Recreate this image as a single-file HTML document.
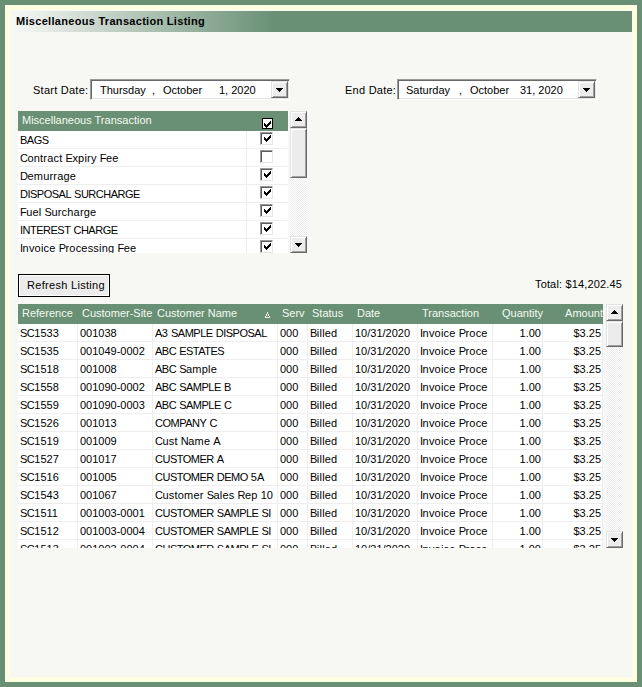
<!DOCTYPE html>
<html><head><meta charset="utf-8"><style>
*{box-sizing:border-box;margin:0;padding:0}
html,body{width:642px;height:687px;overflow:hidden;background:#699075;font-family:"Liberation Sans",sans-serif;font-size:11px;color:#000}
.a{position:absolute}
.t{position:absolute;white-space:nowrap;line-height:13px;height:13px}
.b{font-weight:bold}
.dbox{position:absolute;width:200px;height:21px;background:#fff;border-top:1px solid #9a9a9a;border-left:1px solid #9a9a9a;border-right:1px solid #fff;border-bottom:1px solid #fff;box-shadow:inset 1px 1px 0 #696969,inset -1px -1px 0 #e3e3e3}
.btn3d{position:absolute;width:17px;height:17px;background:#ececec;border-top:1px solid #e3e3e3;border-left:1px solid #e3e3e3;border-right:1px solid #696969;border-bottom:1px solid #696969;box-shadow:inset 1px 1px 0 #fff,inset -1px -1px 0 #a0a0a0}
.sb{position:absolute;width:17px;background-color:#fff;background-image:linear-gradient(45deg,#ececec 25%,transparent 25%,transparent 75%,#ececec 75%),linear-gradient(45deg,#ececec 25%,transparent 25%,transparent 75%,#ececec 75%);background-size:2px 2px;background-position:0 0,1px 1px}
.row{position:absolute;height:18px;background:#fff;border-bottom:1px solid #eeeeee}
.c{position:absolute;top:0;height:17px;overflow:hidden;white-space:nowrap;line-height:13px;padding-top:3px;padding-left:2px;border-right:1px solid #eeeeee}
.r{text-align:right;padding-left:0;padding-right:1px}
.cb{position:absolute;width:13px;height:13px;background:#fff;border-top:1px solid #9a9a9a;border-left:1px solid #9a9a9a;border-right:1px solid #e6e6e6;border-bottom:1px solid #e6e6e6;box-shadow:inset 1px 1px 0 #5c5c5c}
.u{letter-spacing:-0.5px}
.w{letter-spacing:0.2px}
.hdr{position:absolute;background:#699075;color:#f4faf0}
</style></head><body>
<div class="a" style="left:5px;top:5px;width:632px;height:677px;background:#fffee0"></div><div class="a" style="left:10px;top:10px;width:622px;height:667px;background:#f7f7f3"></div><div class="a" style="left:16px;top:11px;width:616px;height:21px;background:linear-gradient(to right,#f6f7f5 0%,#699075 42%,#699075 100%)"></div><div class="t b" style="left:16px;top:15px;letter-spacing:0.3px">Miscellaneous Transaction Listing</div><div class="t " style="left:33px;top:84px;letter-spacing:0.25px">Start Date:</div><div class="dbox" style="left:90px;top:79px"></div><div class="t " style="left:100px;top:84px;">Thursday</div><div class="t " style="left:152px;top:84px;">,</div><div class="t " style="left:163px;top:84px;">October</div><div class="t " style="left:219px;top:84px;">1, 2020</div><div class="btn3d" style="left:271px;top:81px"></div><div class="a" style="left:276px;top:88px;width:7px;height:1px;background:#000"></div><div class="a" style="left:277px;top:89px;width:5px;height:1px;background:#000"></div><div class="a" style="left:278px;top:90px;width:3px;height:1px;background:#000"></div><div class="a" style="left:279px;top:91px;width:1px;height:1px;background:#000"></div><div class="t " style="left:345px;top:84px;letter-spacing:0.25px">End Date:</div><div class="dbox" style="left:397px;top:79px"></div><div class="t " style="left:406px;top:84px;">Saturday</div><div class="t " style="left:459px;top:84px;">,</div><div class="t " style="left:470px;top:84px;">October</div><div class="t " style="left:520px;top:84px;">31, 2020</div><div class="btn3d" style="left:578px;top:81px"></div><div class="a" style="left:583px;top:88px;width:7px;height:1px;background:#000"></div><div class="a" style="left:584px;top:89px;width:5px;height:1px;background:#000"></div><div class="a" style="left:585px;top:90px;width:3px;height:1px;background:#000"></div><div class="a" style="left:586px;top:91px;width:1px;height:1px;background:#000"></div><div class="a" style="left:18px;top:111px;width:270px;height:142px;overflow:hidden"><div class="hdr" style="left:0;top:0;width:270px;height:20px"></div><div class="t " style="left:4px;top:3px;color:#f4faf0">Miscellaneous Transaction</div><div class="a" style="left:244px;top:7px;width:11px;height:11px;background:#fff;border:1px solid #000"></div><div class="a" style="left:252px;top:10px;width:1px;height:1px;background:#000"></div><div class="a" style="left:251px;top:11px;width:1px;height:1px;background:#000"></div><div class="a" style="left:252px;top:11px;width:1px;height:1px;background:#000"></div><div class="a" style="left:246px;top:12px;width:1px;height:1px;background:#000"></div><div class="a" style="left:250px;top:12px;width:1px;height:1px;background:#000"></div><div class="a" style="left:251px;top:12px;width:1px;height:1px;background:#000"></div><div class="a" style="left:252px;top:12px;width:1px;height:1px;background:#000"></div><div class="a" style="left:246px;top:13px;width:1px;height:1px;background:#000"></div><div class="a" style="left:247px;top:13px;width:1px;height:1px;background:#000"></div><div class="a" style="left:249px;top:13px;width:1px;height:1px;background:#000"></div><div class="a" style="left:250px;top:13px;width:1px;height:1px;background:#000"></div><div class="a" style="left:251px;top:13px;width:1px;height:1px;background:#000"></div><div class="a" style="left:246px;top:14px;width:1px;height:1px;background:#000"></div><div class="a" style="left:247px;top:14px;width:1px;height:1px;background:#000"></div><div class="a" style="left:248px;top:14px;width:1px;height:1px;background:#000"></div><div class="a" style="left:249px;top:14px;width:1px;height:1px;background:#000"></div><div class="a" style="left:250px;top:14px;width:1px;height:1px;background:#000"></div><div class="a" style="left:247px;top:15px;width:1px;height:1px;background:#000"></div><div class="a" style="left:248px;top:15px;width:1px;height:1px;background:#000"></div><div class="a" style="left:249px;top:15px;width:1px;height:1px;background:#000"></div><div class="a" style="left:248px;top:16px;width:1px;height:1px;background:#000"></div><div class="row" style="left:0;top:20px;width:270px"><div class="c" style="left:0;width:229px"><span class="u">BAGS</span></div><div class="c" style="left:229px;width:41px;border-right:none"></div></div><div class="cb" style="left:242px;top:21px"></div><div class="a" style="left:252px;top:24px;width:1px;height:1px;background:#000"></div><div class="a" style="left:251px;top:25px;width:1px;height:1px;background:#000"></div><div class="a" style="left:252px;top:25px;width:1px;height:1px;background:#000"></div><div class="a" style="left:246px;top:26px;width:1px;height:1px;background:#000"></div><div class="a" style="left:250px;top:26px;width:1px;height:1px;background:#000"></div><div class="a" style="left:251px;top:26px;width:1px;height:1px;background:#000"></div><div class="a" style="left:252px;top:26px;width:1px;height:1px;background:#000"></div><div class="a" style="left:246px;top:27px;width:1px;height:1px;background:#000"></div><div class="a" style="left:247px;top:27px;width:1px;height:1px;background:#000"></div><div class="a" style="left:249px;top:27px;width:1px;height:1px;background:#000"></div><div class="a" style="left:250px;top:27px;width:1px;height:1px;background:#000"></div><div class="a" style="left:251px;top:27px;width:1px;height:1px;background:#000"></div><div class="a" style="left:246px;top:28px;width:1px;height:1px;background:#000"></div><div class="a" style="left:247px;top:28px;width:1px;height:1px;background:#000"></div><div class="a" style="left:248px;top:28px;width:1px;height:1px;background:#000"></div><div class="a" style="left:249px;top:28px;width:1px;height:1px;background:#000"></div><div class="a" style="left:250px;top:28px;width:1px;height:1px;background:#000"></div><div class="a" style="left:247px;top:29px;width:1px;height:1px;background:#000"></div><div class="a" style="left:248px;top:29px;width:1px;height:1px;background:#000"></div><div class="a" style="left:249px;top:29px;width:1px;height:1px;background:#000"></div><div class="a" style="left:248px;top:30px;width:1px;height:1px;background:#000"></div><div class="row" style="left:0;top:38px;width:270px"><div class="c" style="left:0;width:229px"><span class="u">C</span><span class="w">ontract</span> <span class="u">E</span><span class="w">xpiry</span> <span class="u">F</span><span class="w">ee</span></div><div class="c" style="left:229px;width:41px;border-right:none"></div></div><div class="cb" style="left:242px;top:39px"></div><div class="row" style="left:0;top:56px;width:270px"><div class="c" style="left:0;width:229px"><span class="u">D</span><span class="w">emurrage</span></div><div class="c" style="left:229px;width:41px;border-right:none"></div></div><div class="cb" style="left:242px;top:57px"></div><div class="a" style="left:252px;top:60px;width:1px;height:1px;background:#000"></div><div class="a" style="left:251px;top:61px;width:1px;height:1px;background:#000"></div><div class="a" style="left:252px;top:61px;width:1px;height:1px;background:#000"></div><div class="a" style="left:246px;top:62px;width:1px;height:1px;background:#000"></div><div class="a" style="left:250px;top:62px;width:1px;height:1px;background:#000"></div><div class="a" style="left:251px;top:62px;width:1px;height:1px;background:#000"></div><div class="a" style="left:252px;top:62px;width:1px;height:1px;background:#000"></div><div class="a" style="left:246px;top:63px;width:1px;height:1px;background:#000"></div><div class="a" style="left:247px;top:63px;width:1px;height:1px;background:#000"></div><div class="a" style="left:249px;top:63px;width:1px;height:1px;background:#000"></div><div class="a" style="left:250px;top:63px;width:1px;height:1px;background:#000"></div><div class="a" style="left:251px;top:63px;width:1px;height:1px;background:#000"></div><div class="a" style="left:246px;top:64px;width:1px;height:1px;background:#000"></div><div class="a" style="left:247px;top:64px;width:1px;height:1px;background:#000"></div><div class="a" style="left:248px;top:64px;width:1px;height:1px;background:#000"></div><div class="a" style="left:249px;top:64px;width:1px;height:1px;background:#000"></div><div class="a" style="left:250px;top:64px;width:1px;height:1px;background:#000"></div><div class="a" style="left:247px;top:65px;width:1px;height:1px;background:#000"></div><div class="a" style="left:248px;top:65px;width:1px;height:1px;background:#000"></div><div class="a" style="left:249px;top:65px;width:1px;height:1px;background:#000"></div><div class="a" style="left:248px;top:66px;width:1px;height:1px;background:#000"></div><div class="row" style="left:0;top:74px;width:270px"><div class="c" style="left:0;width:229px"><span class="u">DISPOSAL</span> <span class="u">SURCHARGE</span></div><div class="c" style="left:229px;width:41px;border-right:none"></div></div><div class="cb" style="left:242px;top:75px"></div><div class="a" style="left:252px;top:78px;width:1px;height:1px;background:#000"></div><div class="a" style="left:251px;top:79px;width:1px;height:1px;background:#000"></div><div class="a" style="left:252px;top:79px;width:1px;height:1px;background:#000"></div><div class="a" style="left:246px;top:80px;width:1px;height:1px;background:#000"></div><div class="a" style="left:250px;top:80px;width:1px;height:1px;background:#000"></div><div class="a" style="left:251px;top:80px;width:1px;height:1px;background:#000"></div><div class="a" style="left:252px;top:80px;width:1px;height:1px;background:#000"></div><div class="a" style="left:246px;top:81px;width:1px;height:1px;background:#000"></div><div class="a" style="left:247px;top:81px;width:1px;height:1px;background:#000"></div><div class="a" style="left:249px;top:81px;width:1px;height:1px;background:#000"></div><div class="a" style="left:250px;top:81px;width:1px;height:1px;background:#000"></div><div class="a" style="left:251px;top:81px;width:1px;height:1px;background:#000"></div><div class="a" style="left:246px;top:82px;width:1px;height:1px;background:#000"></div><div class="a" style="left:247px;top:82px;width:1px;height:1px;background:#000"></div><div class="a" style="left:248px;top:82px;width:1px;height:1px;background:#000"></div><div class="a" style="left:249px;top:82px;width:1px;height:1px;background:#000"></div><div class="a" style="left:250px;top:82px;width:1px;height:1px;background:#000"></div><div class="a" style="left:247px;top:83px;width:1px;height:1px;background:#000"></div><div class="a" style="left:248px;top:83px;width:1px;height:1px;background:#000"></div><div class="a" style="left:249px;top:83px;width:1px;height:1px;background:#000"></div><div class="a" style="left:248px;top:84px;width:1px;height:1px;background:#000"></div><div class="row" style="left:0;top:92px;width:270px"><div class="c" style="left:0;width:229px"><span class="u">F</span><span class="w">uel</span> <span class="u">S</span><span class="w">urcharge</span></div><div class="c" style="left:229px;width:41px;border-right:none"></div></div><div class="cb" style="left:242px;top:93px"></div><div class="a" style="left:252px;top:96px;width:1px;height:1px;background:#000"></div><div class="a" style="left:251px;top:97px;width:1px;height:1px;background:#000"></div><div class="a" style="left:252px;top:97px;width:1px;height:1px;background:#000"></div><div class="a" style="left:246px;top:98px;width:1px;height:1px;background:#000"></div><div class="a" style="left:250px;top:98px;width:1px;height:1px;background:#000"></div><div class="a" style="left:251px;top:98px;width:1px;height:1px;background:#000"></div><div class="a" style="left:252px;top:98px;width:1px;height:1px;background:#000"></div><div class="a" style="left:246px;top:99px;width:1px;height:1px;background:#000"></div><div class="a" style="left:247px;top:99px;width:1px;height:1px;background:#000"></div><div class="a" style="left:249px;top:99px;width:1px;height:1px;background:#000"></div><div class="a" style="left:250px;top:99px;width:1px;height:1px;background:#000"></div><div class="a" style="left:251px;top:99px;width:1px;height:1px;background:#000"></div><div class="a" style="left:246px;top:100px;width:1px;height:1px;background:#000"></div><div class="a" style="left:247px;top:100px;width:1px;height:1px;background:#000"></div><div class="a" style="left:248px;top:100px;width:1px;height:1px;background:#000"></div><div class="a" style="left:249px;top:100px;width:1px;height:1px;background:#000"></div><div class="a" style="left:250px;top:100px;width:1px;height:1px;background:#000"></div><div class="a" style="left:247px;top:101px;width:1px;height:1px;background:#000"></div><div class="a" style="left:248px;top:101px;width:1px;height:1px;background:#000"></div><div class="a" style="left:249px;top:101px;width:1px;height:1px;background:#000"></div><div class="a" style="left:248px;top:102px;width:1px;height:1px;background:#000"></div><div class="row" style="left:0;top:110px;width:270px"><div class="c" style="left:0;width:229px"><span class="u">INTEREST</span> <span class="u">CHARGE</span></div><div class="c" style="left:229px;width:41px;border-right:none"></div></div><div class="cb" style="left:242px;top:111px"></div><div class="a" style="left:252px;top:114px;width:1px;height:1px;background:#000"></div><div class="a" style="left:251px;top:115px;width:1px;height:1px;background:#000"></div><div class="a" style="left:252px;top:115px;width:1px;height:1px;background:#000"></div><div class="a" style="left:246px;top:116px;width:1px;height:1px;background:#000"></div><div class="a" style="left:250px;top:116px;width:1px;height:1px;background:#000"></div><div class="a" style="left:251px;top:116px;width:1px;height:1px;background:#000"></div><div class="a" style="left:252px;top:116px;width:1px;height:1px;background:#000"></div><div class="a" style="left:246px;top:117px;width:1px;height:1px;background:#000"></div><div class="a" style="left:247px;top:117px;width:1px;height:1px;background:#000"></div><div class="a" style="left:249px;top:117px;width:1px;height:1px;background:#000"></div><div class="a" style="left:250px;top:117px;width:1px;height:1px;background:#000"></div><div class="a" style="left:251px;top:117px;width:1px;height:1px;background:#000"></div><div class="a" style="left:246px;top:118px;width:1px;height:1px;background:#000"></div><div class="a" style="left:247px;top:118px;width:1px;height:1px;background:#000"></div><div class="a" style="left:248px;top:118px;width:1px;height:1px;background:#000"></div><div class="a" style="left:249px;top:118px;width:1px;height:1px;background:#000"></div><div class="a" style="left:250px;top:118px;width:1px;height:1px;background:#000"></div><div class="a" style="left:247px;top:119px;width:1px;height:1px;background:#000"></div><div class="a" style="left:248px;top:119px;width:1px;height:1px;background:#000"></div><div class="a" style="left:249px;top:119px;width:1px;height:1px;background:#000"></div><div class="a" style="left:248px;top:120px;width:1px;height:1px;background:#000"></div><div class="row" style="left:0;top:128px;width:270px"><div class="c" style="left:0;width:229px"><span class="u">I</span><span class="w">nvoice</span> <span class="u">P</span><span class="w">rocessing</span> <span class="u">F</span><span class="w">ee</span></div><div class="c" style="left:229px;width:41px;border-right:none"></div></div><div class="cb" style="left:242px;top:129px"></div><div class="a" style="left:252px;top:132px;width:1px;height:1px;background:#000"></div><div class="a" style="left:251px;top:133px;width:1px;height:1px;background:#000"></div><div class="a" style="left:252px;top:133px;width:1px;height:1px;background:#000"></div><div class="a" style="left:246px;top:134px;width:1px;height:1px;background:#000"></div><div class="a" style="left:250px;top:134px;width:1px;height:1px;background:#000"></div><div class="a" style="left:251px;top:134px;width:1px;height:1px;background:#000"></div><div class="a" style="left:252px;top:134px;width:1px;height:1px;background:#000"></div><div class="a" style="left:246px;top:135px;width:1px;height:1px;background:#000"></div><div class="a" style="left:247px;top:135px;width:1px;height:1px;background:#000"></div><div class="a" style="left:249px;top:135px;width:1px;height:1px;background:#000"></div><div class="a" style="left:250px;top:135px;width:1px;height:1px;background:#000"></div><div class="a" style="left:251px;top:135px;width:1px;height:1px;background:#000"></div><div class="a" style="left:246px;top:136px;width:1px;height:1px;background:#000"></div><div class="a" style="left:247px;top:136px;width:1px;height:1px;background:#000"></div><div class="a" style="left:248px;top:136px;width:1px;height:1px;background:#000"></div><div class="a" style="left:249px;top:136px;width:1px;height:1px;background:#000"></div><div class="a" style="left:250px;top:136px;width:1px;height:1px;background:#000"></div><div class="a" style="left:247px;top:137px;width:1px;height:1px;background:#000"></div><div class="a" style="left:248px;top:137px;width:1px;height:1px;background:#000"></div><div class="a" style="left:249px;top:137px;width:1px;height:1px;background:#000"></div><div class="a" style="left:248px;top:138px;width:1px;height:1px;background:#000"></div></div><div class="sb" style="left:290px;top:111px;height:142px"></div><div class="btn3d" style="left:290px;top:111px"></div><div class="a" style="left:298px;top:117px;width:1px;height:1px;background:#000"></div><div class="a" style="left:297px;top:118px;width:3px;height:1px;background:#000"></div><div class="a" style="left:296px;top:119px;width:5px;height:1px;background:#000"></div><div class="a" style="left:295px;top:120px;width:7px;height:1px;background:#000"></div><div class="btn3d" style="left:290px;top:128px;height:50px"></div><div class="btn3d" style="left:290px;top:236px"></div><div class="a" style="left:295px;top:243px;width:7px;height:1px;background:#000"></div><div class="a" style="left:296px;top:244px;width:5px;height:1px;background:#000"></div><div class="a" style="left:297px;top:245px;width:3px;height:1px;background:#000"></div><div class="a" style="left:298px;top:246px;width:1px;height:1px;background:#000"></div><div class="a" style="left:18px;top:274px;width:92px;height:23px;background:#ececec;border:1px solid #000;box-shadow:inset 1px 1px 0 #fff,inset -1px -1px 0 #fff"></div><div class="t " style="left:27px;top:279px;letter-spacing:0.3px">Refresh Listing</div><div class="t " style="left:535px;top:278px;letter-spacing:0.15px">Total: $14,202.45</div><div class="a" style="left:18px;top:304px;width:585px;height:244px;overflow:hidden"><div class="hdr" style="left:0;top:0;width:585px;height:20px"></div><div class="t " style="left:4px;top:3px;color:#f4faf0">Reference</div><div class="t " style="left:64px;top:3px;color:#f4faf0">Customer-Site</div><div class="t " style="left:139px;top:3px;color:#f4faf0">Customer Name</div><div class="t " style="left:264px;top:3px;color:#f4faf0">Serv</div><div class="t " style="left:294px;top:3px;color:#f4faf0">Status</div><div class="t " style="left:339px;top:3px;color:#f4faf0">Date</div><div class="t " style="left:404px;top:3px;color:#f4faf0">Transaction</div><div class="t" style="left:475px;top:3px;width:50px;text-align:right;color:#f4faf0;padding-right:0px">Quantity</div><div class="t" style="left:525px;top:3px;width:60px;text-align:right;color:#f4faf0;padding-right:0px">Amount</div><div class="a" style="left:247px;top:8px;width:5px;height:6px"><svg width="5" height="6" style="display:block"><path d="M2 0h1v2h-1zM1 2h1v2h-1zM3 2h1v2h-1zM0 4h1v1h-1zM4 4h1v1h-1zM0 5h5v1h-5z" fill="#f2f2e0"/></svg></div><div class="row" style="left:0;top:20px;width:585px"><div class="c" style="left:0px;width:60px;"><span class="u">SC</span>1533</div><div class="c" style="left:60px;width:75px;">001038</div><div class="c" style="left:135px;width:125px;"><span class="u">A</span>3 <span class="u">SAMPLE</span> <span class="u">DISPOSAL</span></div><div class="c" style="left:260px;width:30px;">000</div><div class="c" style="left:290px;width:45px;"><span class="u">B</span><span class="w">illed</span></div><div class="c" style="left:335px;width:65px;">10/31/2020</div><div class="c" style="left:400px;width:75px;"><span class="u">I</span><span class="w">nvoice</span> <span class="u">P</span><span class="w">roce</span></div><div class="c r" style="left:475px;width:50px;">1.00</div><div class="c r" style="left:525px;width:60px;">$3.25</div></div><div class="row" style="left:0;top:38px;width:585px"><div class="c" style="left:0px;width:60px;"><span class="u">SC</span>1535</div><div class="c" style="left:60px;width:75px;">001049-0002</div><div class="c" style="left:135px;width:125px;"><span class="u">ABC</span> <span class="u">ESTATES</span></div><div class="c" style="left:260px;width:30px;">000</div><div class="c" style="left:290px;width:45px;"><span class="u">B</span><span class="w">illed</span></div><div class="c" style="left:335px;width:65px;">10/31/2020</div><div class="c" style="left:400px;width:75px;"><span class="u">I</span><span class="w">nvoice</span> <span class="u">P</span><span class="w">roce</span></div><div class="c r" style="left:475px;width:50px;">1.00</div><div class="c r" style="left:525px;width:60px;">$3.25</div></div><div class="row" style="left:0;top:56px;width:585px"><div class="c" style="left:0px;width:60px;"><span class="u">SC</span>1518</div><div class="c" style="left:60px;width:75px;">001008</div><div class="c" style="left:135px;width:125px;"><span class="u">ABC</span> <span class="u">S</span><span class="w">ample</span></div><div class="c" style="left:260px;width:30px;">000</div><div class="c" style="left:290px;width:45px;"><span class="u">B</span><span class="w">illed</span></div><div class="c" style="left:335px;width:65px;">10/31/2020</div><div class="c" style="left:400px;width:75px;"><span class="u">I</span><span class="w">nvoice</span> <span class="u">P</span><span class="w">roce</span></div><div class="c r" style="left:475px;width:50px;">1.00</div><div class="c r" style="left:525px;width:60px;">$3.25</div></div><div class="row" style="left:0;top:74px;width:585px"><div class="c" style="left:0px;width:60px;"><span class="u">SC</span>1558</div><div class="c" style="left:60px;width:75px;">001090-0002</div><div class="c" style="left:135px;width:125px;"><span class="u">ABC</span> <span class="u">SAMPLE</span> <span class="u">B</span></div><div class="c" style="left:260px;width:30px;">000</div><div class="c" style="left:290px;width:45px;"><span class="u">B</span><span class="w">illed</span></div><div class="c" style="left:335px;width:65px;">10/31/2020</div><div class="c" style="left:400px;width:75px;"><span class="u">I</span><span class="w">nvoice</span> <span class="u">P</span><span class="w">roce</span></div><div class="c r" style="left:475px;width:50px;">1.00</div><div class="c r" style="left:525px;width:60px;">$3.25</div></div><div class="row" style="left:0;top:92px;width:585px"><div class="c" style="left:0px;width:60px;"><span class="u">SC</span>1559</div><div class="c" style="left:60px;width:75px;">001090-0003</div><div class="c" style="left:135px;width:125px;"><span class="u">ABC</span> <span class="u">SAMPLE</span> <span class="u">C</span></div><div class="c" style="left:260px;width:30px;">000</div><div class="c" style="left:290px;width:45px;"><span class="u">B</span><span class="w">illed</span></div><div class="c" style="left:335px;width:65px;">10/31/2020</div><div class="c" style="left:400px;width:75px;"><span class="u">I</span><span class="w">nvoice</span> <span class="u">P</span><span class="w">roce</span></div><div class="c r" style="left:475px;width:50px;">1.00</div><div class="c r" style="left:525px;width:60px;">$3.25</div></div><div class="row" style="left:0;top:110px;width:585px"><div class="c" style="left:0px;width:60px;"><span class="u">SC</span>1526</div><div class="c" style="left:60px;width:75px;">001013</div><div class="c" style="left:135px;width:125px;"><span class="u">COMPANY</span> <span class="u">C</span></div><div class="c" style="left:260px;width:30px;">000</div><div class="c" style="left:290px;width:45px;"><span class="u">B</span><span class="w">illed</span></div><div class="c" style="left:335px;width:65px;">10/31/2020</div><div class="c" style="left:400px;width:75px;"><span class="u">I</span><span class="w">nvoice</span> <span class="u">P</span><span class="w">roce</span></div><div class="c r" style="left:475px;width:50px;">1.00</div><div class="c r" style="left:525px;width:60px;">$3.25</div></div><div class="row" style="left:0;top:128px;width:585px"><div class="c" style="left:0px;width:60px;"><span class="u">SC</span>1519</div><div class="c" style="left:60px;width:75px;">001009</div><div class="c" style="left:135px;width:125px;"><span class="u">C</span><span class="w">ust</span> <span class="u">N</span><span class="w">ame</span> <span class="u">A</span></div><div class="c" style="left:260px;width:30px;">000</div><div class="c" style="left:290px;width:45px;"><span class="u">B</span><span class="w">illed</span></div><div class="c" style="left:335px;width:65px;">10/31/2020</div><div class="c" style="left:400px;width:75px;"><span class="u">I</span><span class="w">nvoice</span> <span class="u">P</span><span class="w">roce</span></div><div class="c r" style="left:475px;width:50px;">1.00</div><div class="c r" style="left:525px;width:60px;">$3.25</div></div><div class="row" style="left:0;top:146px;width:585px"><div class="c" style="left:0px;width:60px;"><span class="u">SC</span>1527</div><div class="c" style="left:60px;width:75px;">001017</div><div class="c" style="left:135px;width:125px;"><span class="u">CUSTOMER</span> <span class="u">A</span></div><div class="c" style="left:260px;width:30px;">000</div><div class="c" style="left:290px;width:45px;"><span class="u">B</span><span class="w">illed</span></div><div class="c" style="left:335px;width:65px;">10/31/2020</div><div class="c" style="left:400px;width:75px;"><span class="u">I</span><span class="w">nvoice</span> <span class="u">P</span><span class="w">roce</span></div><div class="c r" style="left:475px;width:50px;">1.00</div><div class="c r" style="left:525px;width:60px;">$3.25</div></div><div class="row" style="left:0;top:164px;width:585px"><div class="c" style="left:0px;width:60px;"><span class="u">SC</span>1516</div><div class="c" style="left:60px;width:75px;">001005</div><div class="c" style="left:135px;width:125px;"><span class="u">CUSTOMER</span> <span class="u">DEMO</span> 5<span class="u">A</span></div><div class="c" style="left:260px;width:30px;">000</div><div class="c" style="left:290px;width:45px;"><span class="u">B</span><span class="w">illed</span></div><div class="c" style="left:335px;width:65px;">10/31/2020</div><div class="c" style="left:400px;width:75px;"><span class="u">I</span><span class="w">nvoice</span> <span class="u">P</span><span class="w">roce</span></div><div class="c r" style="left:475px;width:50px;">1.00</div><div class="c r" style="left:525px;width:60px;">$3.25</div></div><div class="row" style="left:0;top:182px;width:585px"><div class="c" style="left:0px;width:60px;"><span class="u">SC</span>1543</div><div class="c" style="left:60px;width:75px;">001067</div><div class="c" style="left:135px;width:125px;"><span class="u">C</span><span class="w">ustomer</span> <span class="u">S</span><span class="w">ales</span> <span class="u">R</span><span class="w">ep</span> 10</div><div class="c" style="left:260px;width:30px;">000</div><div class="c" style="left:290px;width:45px;"><span class="u">B</span><span class="w">illed</span></div><div class="c" style="left:335px;width:65px;">10/31/2020</div><div class="c" style="left:400px;width:75px;"><span class="u">I</span><span class="w">nvoice</span> <span class="u">P</span><span class="w">roce</span></div><div class="c r" style="left:475px;width:50px;">1.00</div><div class="c r" style="left:525px;width:60px;">$3.25</div></div><div class="row" style="left:0;top:200px;width:585px"><div class="c" style="left:0px;width:60px;"><span class="u">SC</span>1511</div><div class="c" style="left:60px;width:75px;">001003-0001</div><div class="c" style="left:135px;width:125px;"><span class="u">CUSTOMER</span> <span class="u">SAMPLE</span> <span class="u">SI</span></div><div class="c" style="left:260px;width:30px;">000</div><div class="c" style="left:290px;width:45px;"><span class="u">B</span><span class="w">illed</span></div><div class="c" style="left:335px;width:65px;">10/31/2020</div><div class="c" style="left:400px;width:75px;"><span class="u">I</span><span class="w">nvoice</span> <span class="u">P</span><span class="w">roce</span></div><div class="c r" style="left:475px;width:50px;">1.00</div><div class="c r" style="left:525px;width:60px;">$3.25</div></div><div class="row" style="left:0;top:218px;width:585px"><div class="c" style="left:0px;width:60px;"><span class="u">SC</span>1512</div><div class="c" style="left:60px;width:75px;">001003-0004</div><div class="c" style="left:135px;width:125px;"><span class="u">CUSTOMER</span> <span class="u">SAMPLE</span> <span class="u">SI</span></div><div class="c" style="left:260px;width:30px;">000</div><div class="c" style="left:290px;width:45px;"><span class="u">B</span><span class="w">illed</span></div><div class="c" style="left:335px;width:65px;">10/31/2020</div><div class="c" style="left:400px;width:75px;"><span class="u">I</span><span class="w">nvoice</span> <span class="u">P</span><span class="w">roce</span></div><div class="c r" style="left:475px;width:50px;">1.00</div><div class="c r" style="left:525px;width:60px;">$3.25</div></div><div class="row" style="left:0;top:236px;width:585px"><div class="c" style="left:0px;width:60px;"><span class="u">SC</span>1513</div><div class="c" style="left:60px;width:75px;">001003-0004</div><div class="c" style="left:135px;width:125px;"><span class="u">CUSTOMER</span> <span class="u">SAMPLE</span> <span class="u">SI</span></div><div class="c" style="left:260px;width:30px;">000</div><div class="c" style="left:290px;width:45px;"><span class="u">B</span><span class="w">illed</span></div><div class="c" style="left:335px;width:65px;">10/31/2020</div><div class="c" style="left:400px;width:75px;"><span class="u">I</span><span class="w">nvoice</span> <span class="u">P</span><span class="w">roce</span></div><div class="c r" style="left:475px;width:50px;">1.00</div><div class="c r" style="left:525px;width:60px;">$3.25</div></div></div><div class="sb" style="left:606px;top:304px;height:244px"></div><div class="btn3d" style="left:606px;top:304px"></div><div class="a" style="left:614px;top:310px;width:1px;height:1px;background:#000"></div><div class="a" style="left:613px;top:311px;width:3px;height:1px;background:#000"></div><div class="a" style="left:612px;top:312px;width:5px;height:1px;background:#000"></div><div class="a" style="left:611px;top:313px;width:7px;height:1px;background:#000"></div><div class="btn3d" style="left:606px;top:321px;height:26px"></div><div class="btn3d" style="left:606px;top:531px"></div><div class="a" style="left:611px;top:538px;width:7px;height:1px;background:#000"></div><div class="a" style="left:612px;top:539px;width:5px;height:1px;background:#000"></div><div class="a" style="left:613px;top:540px;width:3px;height:1px;background:#000"></div><div class="a" style="left:614px;top:541px;width:1px;height:1px;background:#000"></div>
</body></html>
